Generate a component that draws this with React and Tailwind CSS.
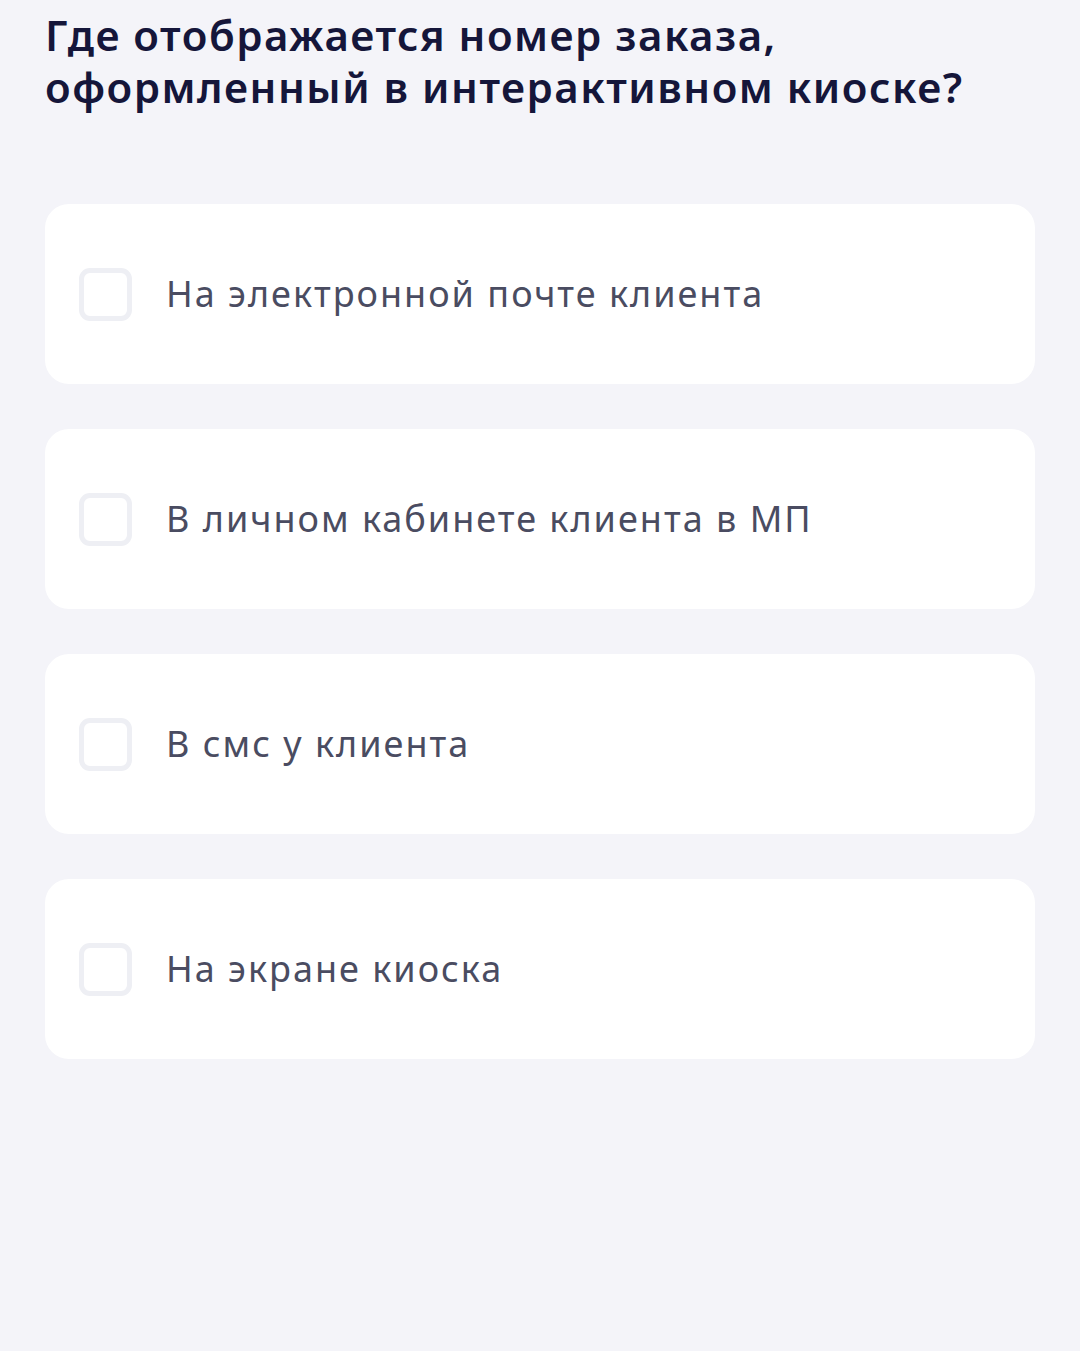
import React from "react";

const options = [
  "На электронной почте клиента",
  "В личном кабинете клиента в МП",
  "В смс у клиента",
  "На экране киоска",
];

export default function App() {
  return (
    <div className="min-h-[1351px] w-full bg-[#f4f4f9] px-[45px] pt-[9px]" style={{ fontFamily: '"Noto Sans", sans-serif' }}>
      <h1 className="text-[42px] font-semibold leading-[52px] tracking-[1.5px] text-[#15163a]">
        Где отображается номер заказа,
        <br />
        оформленный в интерактивном киоске?
      </h1>
      <div className="mt-[91px] flex flex-col gap-[45px]">
        {options.map((o) => (
          <div key={o} className="flex h-[180px] items-center rounded-[24px] bg-white">
            <div className="ml-[34px] h-[53px] w-[53px] shrink-0 rounded-[11px] border-[5px] border-[#eeeff4] bg-white" />
            <span className="ml-[34px] text-[36px] tracking-[2px] text-[#4a4c61]">{o}</span>
          </div>
        ))}
      </div>
    </div>
  );
}
